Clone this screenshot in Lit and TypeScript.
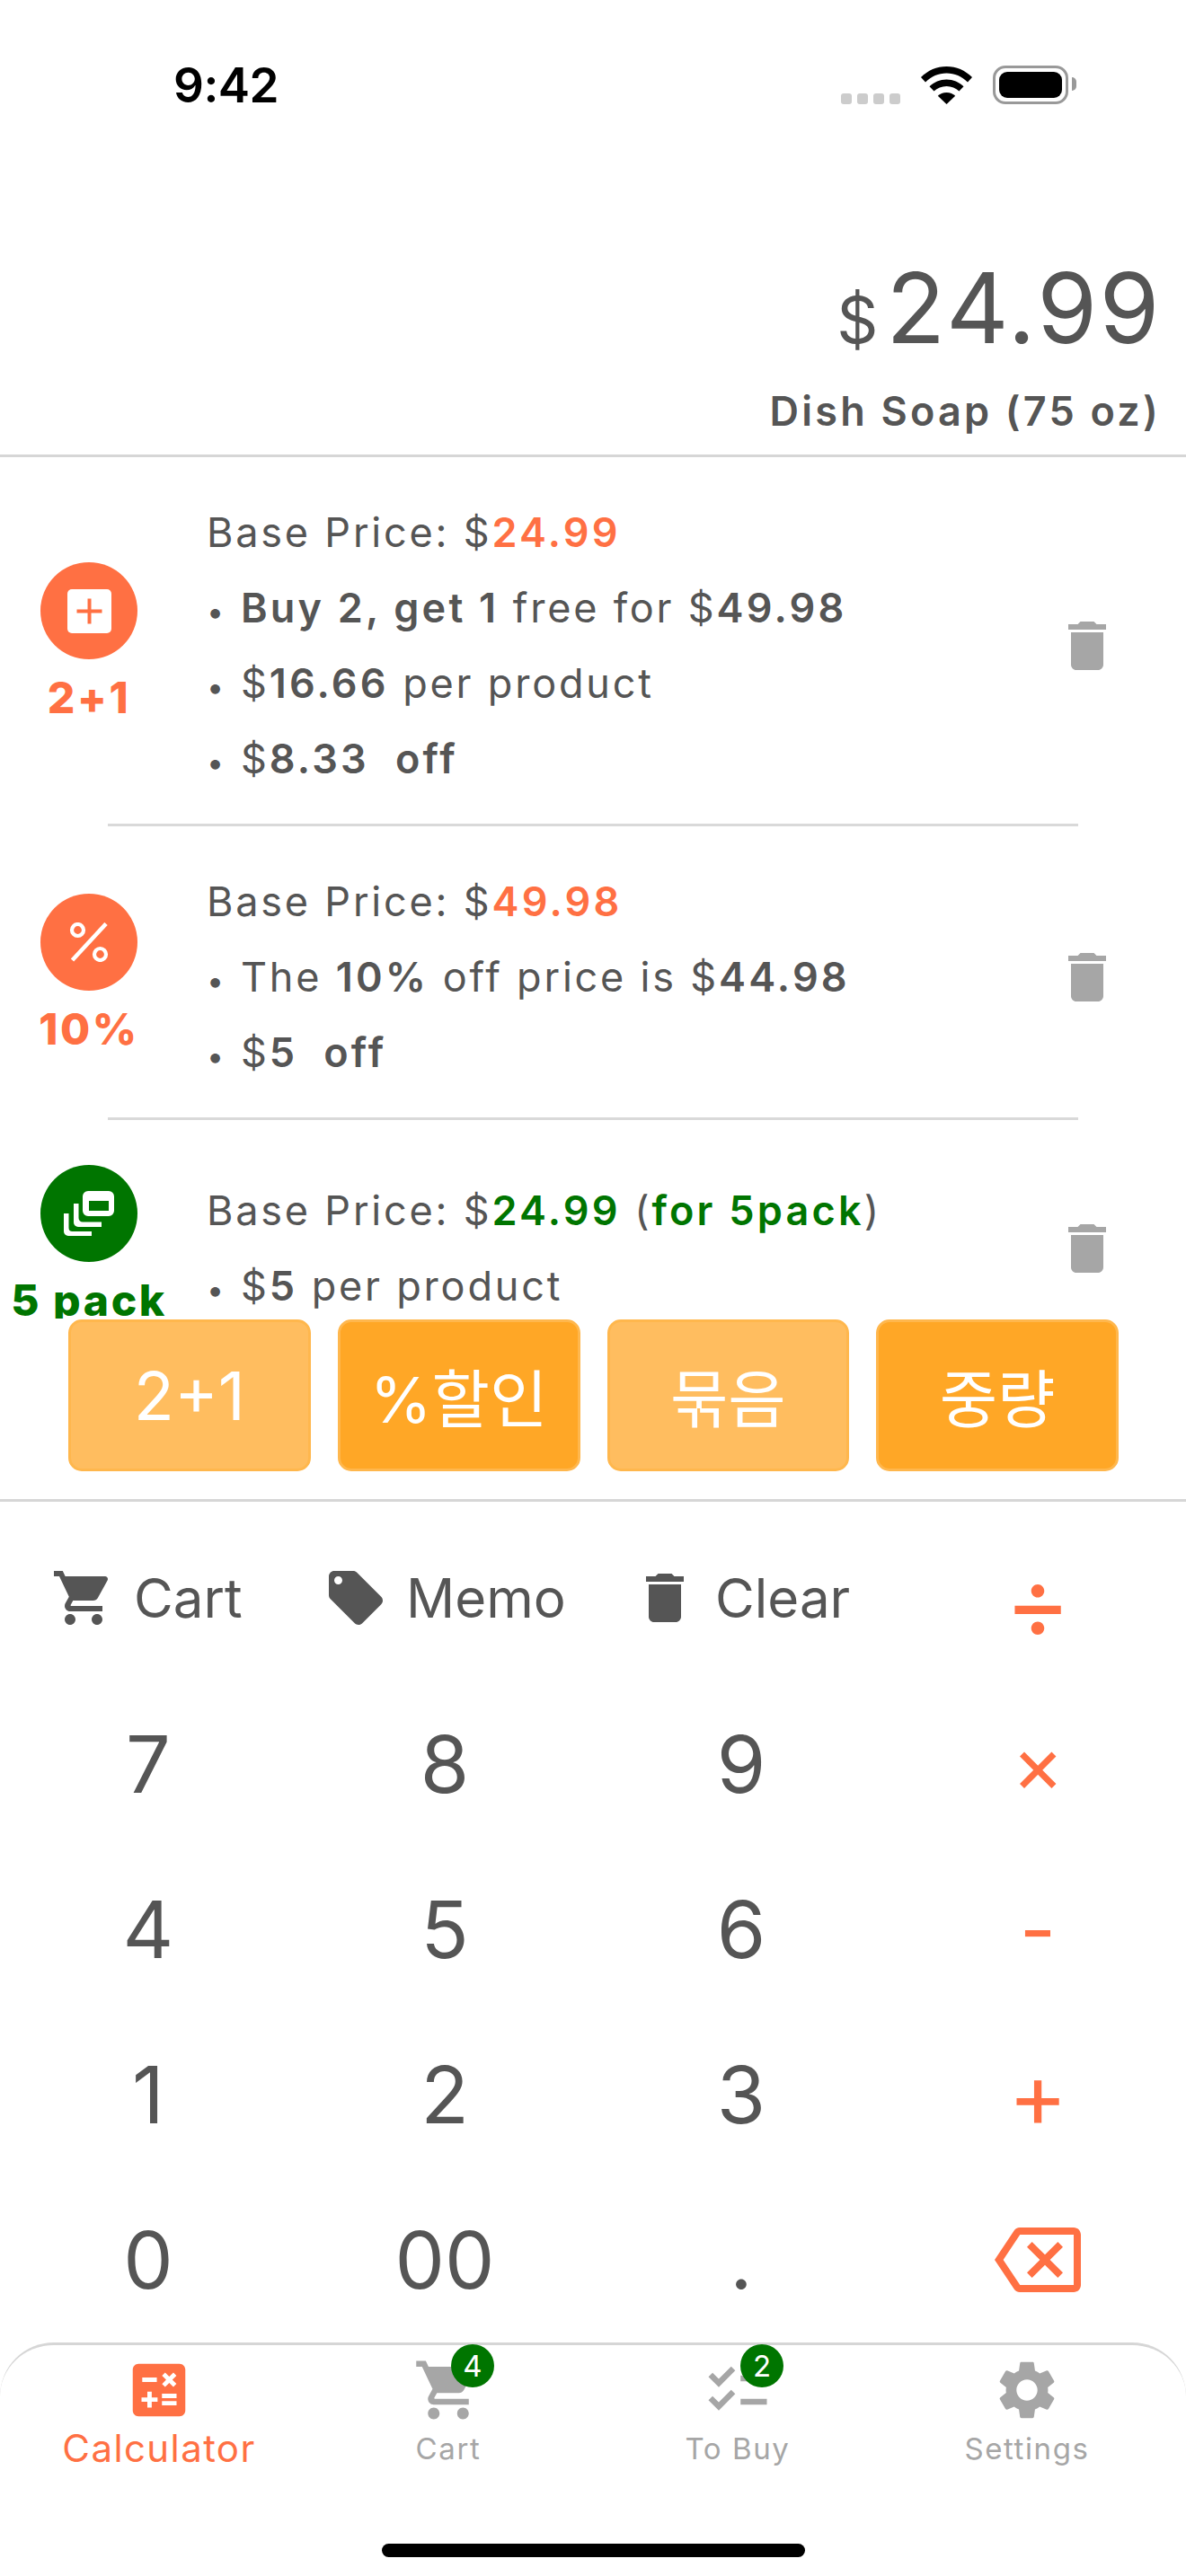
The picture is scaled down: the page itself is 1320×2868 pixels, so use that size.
import { LitElement, html, css, svg } from "lit";
import { customElement } from "lit/decorators.js";

const P = {
  del: "M6 19c0 1.1.9 2 2 2h8c1.1 0 2-.9 2-2V7H6v12zM19 4h-3.5l-1-1h-5l-1 1H5v2h14V4z",
  cart: "M7 18c-1.1 0-1.99.9-1.99 2S5.9 22 7 22s2-.9 2-2-.9-2-2-2zM1 2v2h2l3.6 7.59-1.35 2.45c-.16.28-.25.61-.25.96 0 1.1.9 2 2 2h12v-2H7.42c-.14 0-.25-.11-.25-.25l.03-.12.9-1.63h7.45c.75 0 1.41-.41 1.75-1.03l3.58-6.49c.08-.14.12-.31.12-.48 0-.55-.45-1-1-1H5.21l-.94-2H1zm16 16c-1.1 0-1.99.9-1.99 2s.89 2 1.99 2 2-.9 2-2-.9-2-2-2z",
  tag: "M21.41 11.58l-9-9C12.05 2.22 11.55 2 11 2H4c-1.1 0-2 .9-2 2v7c0 .55.22 1.05.59 1.42l9 9c.36.36.86.58 1.41.58.55 0 1.05-.22 1.41-.59l7-7c.37-.36.59-.86.59-1.41 0-.55-.23-1.06-.59-1.42zM5.5 7C4.67 7 4 6.33 4 5.5S4.67 4 5.5 4 7 4.67 7 5.5 6.33 7 5.5 7z",
  calc: "M19 3H5c-1.1 0-2 .9-2 2v14c0 1.1.9 2 2 2h14c1.1 0 2-.9 2-2V5c0-1.1-.9-2-2-2zm-5.97 4.06L14.09 6l1.41 1.41L16.91 6l1.06 1.06-1.41 1.41 1.41 1.41-1.06 1.06-1.41-1.4-1.41 1.41-1.06-1.06 1.41-1.41-1.41-1.42zm-6.78.66h5v1.5h-5v-1.5zM11.5 16h-2v2H8v-2H6v-1.5h2v-2h1.5v2h2V16zm6.5 1.25h-5v-1.5h5v1.5zm0-2.5h-5v-1.5h5v1.5z",
  gear: "M19.14 12.94c.04-.3.06-.61.06-.94 0-.32-.02-.64-.07-.94l2.03-1.58c.18-.14.23-.41.12-.61l-1.92-3.32c-.12-.22-.37-.29-.59-.22l-2.39.96c-.5-.38-1.03-.7-1.62-.94l-.36-2.54c-.04-.24-.24-.41-.48-.41h-3.84c-.24 0-.43.17-.47.41l-.36 2.54c-.59.24-1.13.57-1.62.94l-2.39-.96c-.22-.08-.47 0-.59.22L2.74 8.87c-.12.21-.08.47.12.61l2.03 1.58c-.05.3-.09.63-.09.94s.02.64.07.94l-2.03 1.58c-.18.14-.23.41-.12.61l1.92 3.32c.12.22.37.29.59.22l2.39-.96c.5.38 1.03.7 1.62.94l.36 2.54c.05.24.24.41.48.41h3.84c.24 0 .44-.17.47-.41l.36-2.54c.59-.24 1.13-.56 1.62-.94l2.39.96c.22.08.47 0 .59-.22l1.92-3.32c.12-.22.07-.47-.12-.61l-2.01-1.58zM12 15.6c-1.98 0-3.6-1.62-3.6-3.6s1.62-3.6 3.6-3.6 3.6 1.62 3.6 3.6-1.62 3.6-3.6 3.6z",
  check: "M22 7h-9v2h9V7zm0 8h-9v2h9v-2zM5.54 11L2 7.46l1.41-1.41 2.12 2.12 4.24-4.24 1.41 1.41L5.54 11zm0 8L2 15.46l1.41-1.41 2.12 2.12 4.24-4.24 1.41 1.41L5.54 19z",
  back: "M22 3H7c-.69 0-1.23.35-1.59.88L0 12l5.41 8.11c.36.53.9.89 1.59.89h15c1.1 0 2-.9 2-2V5c0-1.1-.9-2-2-2zm0 16H7.07L2.4 12l4.66-7H22v14zm-11.59-2L14 13.41 17.59 17 19 15.59 15.41 12 19 8.41 17.59 7 14 10.59 10.41 7 9 8.41 12.59 12 9 15.59z",
};

const ic = (d: string, cls: string) =>
  html`<svg class=${cls} viewBox="0 0 24 24" fill="currentColor"><path d=${d}></path></svg>`;

const dot = html`<span class="dot">•</span>`;

const ROWS = [
  {
    cls: "row r1", tone: "o", label: "2+1",
    glyph: svg`<rect x="0" y="0" width="49" height="49" rx="5" fill="#fff"/><path d="M22.500 10.500h4v12h12v4h-12v12h-4v-12h-12v-4h12z" fill="#FF7043"/>`,
    vb: "0 0 49 49", gc: "g49",
    lines: [
      html`Base Price: $<b class="o">24.99</b>`,
      html`${dot}<b>Buy 2, get 1</b> free for $<b>49.98</b>`,
      html`${dot}$<b>16.66</b> per product`,
      html`${dot}$<b>8.33  off</b>`,
    ],
  },
  {
    cls: "row r2", tone: "o", label: "10%",
    glyph: svg`<circle cx="9.500" cy="8.500" r="6.500" fill="none" stroke="#fff" stroke-width="4.200"/><circle cx="34.500" cy="35.500" r="6.500" fill="none" stroke="#fff" stroke-width="4.200"/><path d="M41 1.500 3.500 42" stroke="#fff" stroke-width="4.600" fill="none"/>`,
    vb: "0 0 44 44", gc: "g44",
    lines: [
      html`Base Price: $<b class="o">49.98</b>`,
      html`${dot}The <b>10%</b> off price is $<b>44.98</b>`,
      html`${dot}$<b>5  off</b>`,
    ],
  },
  {
    cls: "row r3", tone: "g", label: "5 pack",
    glyph: svg`<path fill-rule="evenodd" fill="#fff" d="M27 0h23a6 6 0 0 1 6 6v16a6 6 0 0 1-6 6H27a6 6 0 0 1-6-6V6a6 6 0 0 1 6-6zm1 11v11h22V11z"/><path fill="#fff" d="M11 14h5.500v16a4.500 4.500 0 0 0 4.500 4.500h21V40H16a5 5 0 0 1-5-5zM0 25h5.500v16a4 4 0 0 0 4 4H31v5H5a5 5 0 0 1-5-5z"/>`,
    vb: "0 0 56 50", gc: "g56",
    lines: [
      html`Base Price: $<b class="g">24.99</b> (<b class="g">for 5pack</b>)`,
      html`${dot}$<b>5</b> per product`,
    ],
  },
];

const PRESETS = [
  { t: "2+1", on: false, cls: "wide" },
  { t: "%할인", on: true, cls: "" },
  { t: "묶음", on: false, cls: "" },
  { t: "중량", on: true, cls: "" },
];

const KEYS = [
  ["7", "8", "9", "×"],
  ["4", "5", "6", "-"],
  ["1", "2", "3", "+"],
  ["0", "00", ".", ""],
];

const TABS = [
  { d: P.calc, l: "Calculator", on: true, b: "" },
  { d: P.cart, l: "Cart", on: false, b: "4" },
  { d: P.check, l: "To Buy", on: false, b: "2" },
  { d: P.gear, l: "Settings", on: false, b: "" },
];

@customElement("app-root")
export class AppRoot extends LitElement {
  static styles = css`
    :host {
      display: flex;
      flex-direction: column;
      width: 1320px;
      height: 2868px;
      overflow: hidden;
      background: #fff;
      color: #555;
      font-family: "Inter", "Noto Sans CJK KR", sans-serif;
    }
    .head {
      height: 509px;
      flex: none;
      box-sizing: border-box;
      border-bottom: 3px solid #d6d6d6;
      display: flex;
      flex-direction: column;
    }
    .status {
      height: 284px;
      flex: none;
      display: flex;
      align-items: flex-start;
      padding: 64px 131px 0 193px;
      box-sizing: border-box;
    }
    .time {
      font-size: 53px;
      line-height: 62px;
      font-weight: 600;
      color: #000;
      flex: 1;
      letter-spacing: -0.5px;
    }
    .sicons {
      display: flex;
      align-items: flex-end;
      height: 52px;
    }
    .dots {
      display: flex;
      gap: 6px;
      margin-right: 23px;
    }
    .dots i {
      width: 12px;
      height: 12px;
      border-radius: 3px;
      background: #ccc;
    }
    .wifi {
      width: 57px;
      height: 42px;
      margin-right: 23px;
    }
    .batt {
      width: 84px;
      height: 43px;
      box-sizing: border-box;
      border: 3px solid #999;
      border-radius: 14px;
      padding: 4px;
      position: relative;
    }
    .batt i {
      display: block;
      height: 100%;
      background: #000;
      border-radius: 9px;
    }
    .batt::after {
      content: "";
      position: absolute;
      right: -12px;
      top: 10px;
      width: 5px;
      height: 15px;
      background: #999;
      border-radius: 0 6px 6px 0;
    }
    .price {
      display: flex;
      justify-content: flex-end;
      align-items: baseline;
      gap: 9px;
      padding-right: 27px;
      line-height: 118px;
      height: 118px;
    }
    .price .cur {
      font-size: 72px;
    }
    .price .val {
      font-size: 108px;
      letter-spacing: 2.4px;
    }
    .name {
      text-align: right;
      padding-right: 28px;
      font-size: 45px;
      font-weight: 600;
      line-height: 56px;
      margin-top: 28px;
      letter-spacing: 3.2px;
    }

    .list {
      height: 959px;
      flex: none;
      overflow: hidden;
    }
    .row {
      display: flex;
      align-items: center;
      box-sizing: border-box;
    }
    .r1 { height: 408px; }
    .r2 { height: 324px; }
    .r3 { height: 274px; }
    .rule {
      height: 3px;
      margin: 0 120px;
      background: #d9d9d9;
    }
    .badge {
      width: 198px;
      flex: none;
      display: flex;
      flex-direction: column;
      align-items: center;
    }
    .disc {
      width: 108px;
      height: 108px;
      border-radius: 50%;
      display: flex;
      align-items: center;
      justify-content: center;
    }
    .disc.o { background: #ff7043; }
    .disc.g { background: #007500; }
    .g49 { width: 49px; height: 49px; }
    .g44 { width: 44px; height: 44px; }
    .g56 { width: 56px; height: 50px; }
    .blabel {
      font-size: 48px;
      font-weight: 800;
      line-height: 66px;
      margin: 10px 0 -10px;
      white-space: nowrap;
      letter-spacing: 2.6px;
    }
    .o { color: #ff7043; }
    .g { color: #007500; }
    .lines {
      flex: 1;
      margin: 12px 0 0 32px;
      font-size: 45px;
      letter-spacing: 2.8px;
    }
    .lines div {
      height: 84px;
      line-height: 84px;
      white-space: pre;
    }
    .lines b { font-weight: 600; letter-spacing: 3.2px; }
    .dot {
      display: inline-block;
      width: 38px;
      font-size: 34px;
      letter-spacing: 0;
    }
    .rtrash {
      flex: none;
      width: 72px;
      height: 72px;
      margin: 12px 74px 0 0;
      color: #a6a6a6;
    }

    .presets {
      height: 204px;
      flex: none;
      box-sizing: border-box;
      border-bottom: 3px solid #d6d6d6;
      padding: 1px 75px 0 76px;
      display: grid;
      grid-template-columns: repeat(4, 1fr);
      gap: 30px;
      align-items: start;
    }
    .pbtn {
      height: 169px;
      box-sizing: border-box;
      border: 3px solid #ffb74d;
      border-radius: 15px;
      background: #ffa726;
      color: #fff;
      font-size: 70px;
      display: flex;
      align-items: center;
      justify-content: center;
    }
    .pbtn.off {
      background: #ffbd5f;
    }
    .pbtn.wide {
      font-size: 74px;
    }

    .pad {
      margin-top: 16px;
      height: 920px;
      flex: none;
      display: grid;
      grid-template-columns: repeat(4, 330px);
      grid-template-rows: repeat(5, 184px);
    }
    .acts {
      grid-column: span 3;
      display: grid;
      grid-template-columns: 303px 344px 1fr;
      padding: 0 0 2px 57px;
      align-items: center;
      font-size: 60px;
    }
    .act {
      display: flex;
      align-items: center;
      gap: 20px;
    }
    .i72 { width: 72px; height: 72px; flex: none; }
    .key {
      display: flex;
      align-items: center;
      justify-content: center;
      font-size: 88px;
      line-height: 1;
    }
    .key.op {
      color: #ff7043;
      box-sizing: border-box;
    }
    .key.op.plus { font-size: 100px; }
    .key.op.div { font-size: 112px; padding-top: 5px; }
    .i96 { width: 96px; height: 96px; color: #ff7043; }

    .tabs {
      flex: 1;
      box-sizing: border-box;
      border-top: 3px solid #d6d6d6;
      border-radius: 60px 60px 0 0;
      display: grid;
      grid-template-columns: repeat(4, 1fr);
      padding: 11px 16px 0;
      position: relative;
    }
    .tab {
      display: flex;
      flex-direction: column;
      align-items: center;
      color: #a6a6a6;
      font-size: 33px;
      letter-spacing: 1.6px;
    }
    .tab.on {
      color: #ff7043;
      font-size: 42px;
      letter-spacing: 1.4px;
    }
    .tabicon {
      position: relative;
      width: 78px;
      height: 78px;
    }
    .tabicon svg { width: 78px; height: 78px; display: block; }
    .tabel {
      line-height: 48px;
      margin-top: 2px;
    }
    .pip {
      position: absolute;
      left: 42px;
      top: -12px;
      width: 48px;
      height: 48px;
      border-radius: 50%;
      background: #007500;
      color: #fff;
      font-size: 33px;
      letter-spacing: 0;
      display: flex;
      align-items: center;
      justify-content: center;
    }
    .home {
      position: absolute;
      left: 425px;
      top: 221px;
      width: 471px;
      height: 15px;
      border-radius: 8px;
      background: #000;
    }
  `;

  render() {
    return html`
      <div class="head">
        <div class="status">
          <div class="time">9:42</div>
          <div class="sicons">
            <div class="dots"><i></i><i></i><i></i><i></i></div>
            <svg class="wifi" viewBox="0 0 57 42">
              <path d="M28.500 0C17.500 0 7.800 4.300 0 12l5 5.500C11.500 11 19.500 7.500 28.500 7.500S45.500 11 52 17.500l5-5.500C49.200 4.300 39.500 0 28.500 0z"/>
              <path d="M28.500 14.500c-7.500 0-13.800 3-19 7.800l5 5.300c3.700-3.400 8.600-5.500 14-5.500s10.300 2.100 14 5.500l5-5.300c-5.200-4.800-11.500-7.800-19-7.800z"/>
              <path d="M28.500 29c-4 0-7.300 1.500-9.700 3.800L28.500 42l9.700-9.200c-2.400-2.300-5.700-3.800-9.700-3.800z"/>
            </svg>
            <div class="batt"><i></i></div>
          </div>
        </div>
        <div class="price"><span class="cur">$</span><span class="val">24.99</span></div>
        <div class="name">Dish Soap (75 oz)</div>
      </div>

      <div class="list">
        ${ROWS.map(
          (r, i) => html`
            ${i > 0 ? html`<div class="rule"></div>` : ""}
            <div class=${r.cls}>
              <div class="badge">
                <div class="disc ${r.tone}">
                  <svg class=${r.gc} viewBox=${r.vb}>${r.glyph}</svg>
                </div>
                <div class="blabel ${r.tone}">${r.label}</div>
              </div>
              <div class="lines">${r.lines.map((l) => html`<div>${l}</div>`)}</div>
              ${ic(P.del, "rtrash")}
            </div>
          `
        )}
      </div>

      <div class="presets">
        ${PRESETS.map((p) => html`<div class="pbtn ${p.on ? "" : "off"} ${p.cls}">${p.t}</div>`)}
      </div>

      <div class="pad">
        <div class="acts">
          <div class="act">${ic(P.cart, "i72")}<span>Cart</span></div>
          <div class="act">${ic(P.tag, "i72")}<span>Memo</span></div>
          <div class="act">${ic(P.del, "i72")}<span>Clear</span></div>
        </div>
        <div class="key op div">÷</div>
        ${KEYS.map((row) =>
          row.map((k, c) =>
            k === ""
              ? html`<div class="key">${ic(P.back, "i96")}</div>`
              : html`<div class="key ${c === 3 ? "op" : ""} ${k === "+" ? "plus" : ""}">${k}</div>`
          )
        )}
      </div>

      <div class="tabs">
        ${TABS.map(
          (t) => html`
            <div class="tab ${t.on ? "on" : ""}">
              <div class="tabicon">
                ${ic(t.d, "")}
                ${t.b ? html`<div class="pip">${t.b}</div>` : ""}
              </div>
              <div class="tabel">${t.l}</div>
            </div>
          `
        )}
        <div class="home"></div>
      </div>
    `;
  }
}
